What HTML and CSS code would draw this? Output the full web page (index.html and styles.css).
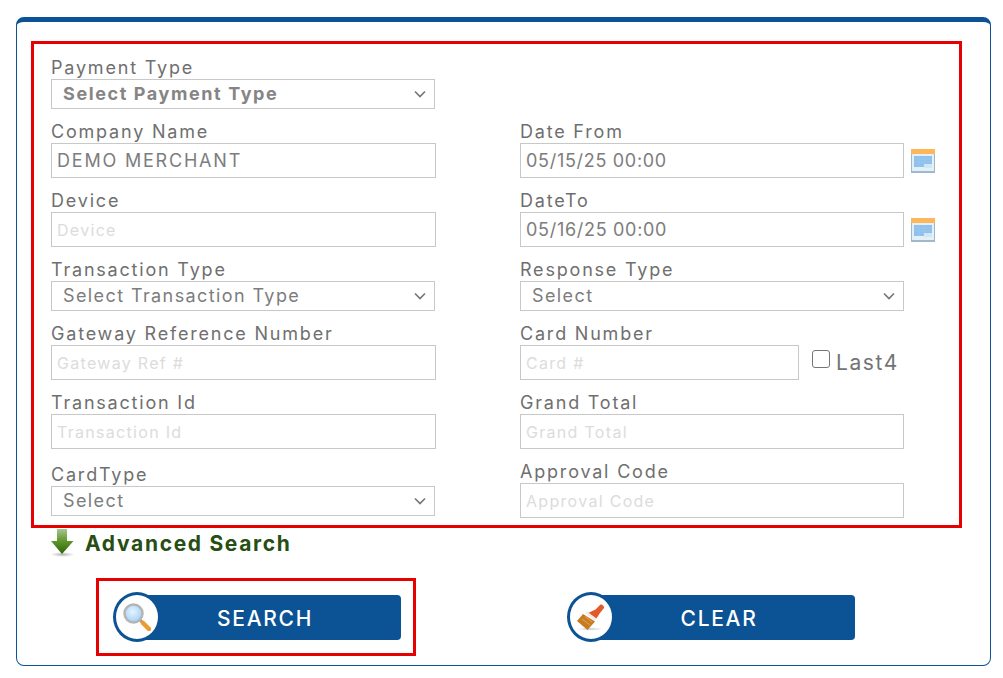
FILE: index.html
```html
<!DOCTYPE html>
<html lang="en">
<head>
  <meta charset="UTF-8">
  <meta name="viewport" content="width=device-width, initial-scale=1.0">
  <title>Transaction Search</title>
  <link rel="stylesheet" href="styles.css">
</head>
<body>
  <div class="panel">
    <div class="highlight filters">
      <div class="col col-left">
        <div class="field">
          <label>Payment Type</label>
          <select class="strong"><option>Select Payment Type</option></select>
        </div>
        <div class="field">
          <label>Company Name</label>
          <input type="text" value="DEMO MERCHANT">
        </div>
        <div class="field">
          <label>Device</label>
          <input type="text" placeholder="Device">
        </div>
        <div class="field">
          <label>Transaction Type</label>
          <select><option>Select Transaction Type</option></select>
        </div>
        <div class="field">
          <label>Gateway Reference Number</label>
          <input type="text" placeholder="Gateway Ref #">
        </div>
        <div class="field">
          <label>Transaction Id</label>
          <input type="text" placeholder="Transaction Id">
        </div>
        <div class="field field-last">
          <label>CardType</label>
          <select><option>Select</option></select>
        </div>
      </div>

      <div class="col col-right">
        <div class="field">
          <label>Date From</label>
          <div class="with-icon">
            <input class="date" type="text" value="05/15/25 00:00">
            <svg class="cal" width="24" height="24" viewBox="0 0 24 24">
              <rect width="24" height="24" fill="#9fb9ca"/>
              <rect width="24" height="5" fill="#fdb65a"/>
              <rect x="1" y="5" width="22" height="17" fill="#e2f0f8"/>
              <rect x="3" y="7" width="18" height="11" fill="#8fc0ee"/>
              <path d="M3 10H21M3 13H21M8 7V18M13 7V18" stroke="#98c6f0" stroke-width="1"/>
              <rect x="13" y="15" width="8" height="4" fill="#d3e6f4"/>
            </svg>
          </div>
        </div>
        <div class="field">
          <label>DateTo</label>
          <div class="with-icon">
            <input class="date" type="text" value="05/16/25 00:00">
            <svg class="cal" width="24" height="24" viewBox="0 0 24 24">
              <rect width="24" height="24" fill="#9fb9ca"/>
              <rect width="24" height="5" fill="#fdb65a"/>
              <rect x="1" y="5" width="22" height="17" fill="#e2f0f8"/>
              <rect x="3" y="7" width="18" height="11" fill="#8fc0ee"/>
              <path d="M3 10H21M3 13H21M8 7V18M13 7V18" stroke="#98c6f0" stroke-width="1"/>
              <rect x="13" y="15" width="8" height="4" fill="#d3e6f4"/>
            </svg>
          </div>
        </div>
        <div class="field">
          <label>Response Type</label>
          <select><option>Select</option></select>
        </div>
        <div class="field">
          <label>Card Number</label>
          <div class="card-row">
            <input type="text" placeholder="Card #">
            <span class="check-box"></span>
            <span class="last4">Last4</span>
          </div>
        </div>
        <div class="field">
          <label>Grand Total</label>
          <input type="text" placeholder="Grand Total">
        </div>
        <div class="field">
          <label>Approval Code</label>
          <input type="text" placeholder="Approval Code">
        </div>
      </div>
    </div>

    <div class="advanced">
      <svg class="soft" width="24" height="28" viewBox="0 0 24 28">
        <defs>
          <linearGradient id="arrowGreen" x1="0" y1="0" x2="0" y2="1">
            <stop offset="0" stop-color="#a9c596"/>
            <stop offset="0.45" stop-color="#64992f"/>
            <stop offset="1" stop-color="#2b6409"/>
          </linearGradient>
          <radialGradient id="arrowShadow">
            <stop offset="0" stop-color="#b5b5b5"/>
            <stop offset="1" stop-color="#fff"/>
          </radialGradient>
        </defs>
        <ellipse cx="11.500" cy="25.500" rx="12" ry="2.500" fill="url(#arrowShadow)"/>
        <path d="M6 0H16V12H22.500L11 25L0 12H6Z" fill="url(#arrowGreen)"/>
      </svg>
      <span>Advanced Search</span>
    </div>

    <div class="actions">
      <div class="highlight action-box">
        <button class="btn" type="button">
          <span class="btn-icon">
            <svg class="soft" width="28" height="28" viewBox="0 0 28 28">
              <defs>
                <radialGradient id="lens" cx="0.45" cy="0.4" r="0.6">
                  <stop offset="0" stop-color="#e4f4ff"/>
                  <stop offset="1" stop-color="#a5d0f5"/>
                </radialGradient>
              </defs>
              <path d="M17 17L20 20" stroke="#9a9a9a" stroke-width="3"/>
              <path d="M20 20L26 26" stroke="#ee9a2c" stroke-width="4.500" stroke-linecap="round"/>
              <circle cx="10.500" cy="10.500" r="9" fill="url(#lens)" stroke="#b5b5b5" stroke-width="2.500"/>
            </svg>
          </span>
          <span class="btn-label">SEARCH</span>
        </button>
      </div>
      <button class="btn btn-clear" type="button">
        <span class="btn-icon">
          <svg class="soft" width="28" height="28" viewBox="0 0 28 28">
            <defs>
              <radialGradient id="brushShadow">
                <stop offset="0" stop-color="#c8c8c8"/>
                <stop offset="1" stop-color="#fff"/>
              </radialGradient>
            </defs>
            <ellipse cx="13" cy="26" rx="13" ry="1.800" fill="url(#brushShadow)"/>
            <path d="M11 10L19 16L23 10L27 5C27.500 3 25 1 23.500 1.500L18.500 6.500Z" fill="#e2592a"/>
            <path d="M8 10L10 8.500L19.500 15.500L18 18Z" fill="#f0ebe6"/>
            <path d="M6 11L18 18.500L10.500 27L0 18Z" fill="#c67a22"/>
            <path d="M5 16L13 22M8 13.500L15 19" stroke="#dc9a42" stroke-width="1.200"/>
          </svg>
        </span>
        <span class="btn-label">CLEAR</span>
      </button>
    </div>
  </div>
</body>
</html>
```

FILE: styles.css
```css
body {
  margin: 0;
  background-color: #fff;
  font-family: "Inter", "Liberation Sans", sans-serif;
  color: #737373;
}

.panel {
  box-sizing: border-box;
  width: 975px;
  height: 649px;
  margin: 17px 0 0 16px;
  padding: 19px 14px 0 14px;
  border: 1px solid #0b5394;
  border-top-width: 5px;
  border-radius: 8px;
}

.highlight {
  border: 3px solid #e60000;
}

.filters {
  box-sizing: border-box;
  display: flex;
  width: 931px;
  height: 487px;
  padding: 13px 0 0 17px;
}

.col-left {
  width: 469px;
}

.col-right {
  padding-top: 64px;
}

.field {
  margin-bottom: 12px;
}

.field-last {
  margin-top: 15px;
}

label {
  display: block;
  height: 22px;
  font-size: 18px;
  line-height: 22px;
  letter-spacing: 1.800px;
  color: #6f6f6f;
}

input, select {
  box-sizing: border-box;
  display: block;
  border: 1px solid #c8c8c8;
  background-color: #fff;
  font-family: inherit;
  color: #7d7d7d;
  border-radius: 0;
  outline: none;
}

input {
  height: 35px;
  width: 385px;
  padding: 0 5px;
  font-size: 18px;
  letter-spacing: 1.800px;
}

input.date {
  letter-spacing: 0.700px;
}

.col-right input {
  width: 384px;
}

input::placeholder {
  color: #dcdcdc;
  font-size: 16px;
  letter-spacing: 1.300px;
  opacity: 1;
}

select {
  appearance: none;
  height: 30px;
  width: 384px;
  padding: 0 11px 2px;
  font-size: 18px;
  letter-spacing: 1.400px;
  background-image: url("data:image/svg+xml,%3Csvg xmlns='http://www.w3.org/2000/svg' width='12' height='8'%3E%3Cpath d='M1 1.500L6 6.500L11 1.500' fill='none' stroke='%23777' stroke-width='1.700'/%3E%3C/svg%3E");
  background-repeat: no-repeat;
  background-position: right 8px center;
}

select.strong {
  font-weight: 700;
  letter-spacing: 1.600px;
  color: #858585;
}

.with-icon {
  display: flex;
  align-items: center;
  gap: 7px;
}

.cal {
  margin-top: 1px;
  filter: blur(0.5px);
}

.soft {
  filter: blur(0.3px);
}

.card-row {
  display: flex;
  align-items: center;
}

.card-row input {
  width: 279px;
}

.check-box {
  box-sizing: border-box;
  width: 18px;
  height: 18px;
  margin: -7px 6px 0 13px;
  border: 1.500px solid #767676;
  border-radius: 3px;
}

.last4 {
  font-size: 21px;
  letter-spacing: 1.600px;
  color: #737373;
}

.advanced {
  display: flex;
  align-items: center;
  gap: 10px;
  height: 30px;
  padding-left: 20px;
  font-size: 21px;
  font-weight: 700;
  letter-spacing: 1.670px;
  color: #274e13;
}

.actions {
  display: flex;
  align-items: center;
  margin-top: 20px;
  padding-left: 65px;
}

.action-box {
  box-sizing: border-box;
  width: 320px;
  height: 78px;
  padding: 11px 0 0 14px;
  margin-right: 151px;
}

.btn {
  position: relative;
  display: block;
  width: 288px;
  height: 50px;
  padding: 0;
  border: 0;
  background: none;
  font-family: inherit;
  color: #fff;
}

.btn::before {
  content: "";
  position: absolute;
  left: 24px;
  right: 0;
  top: 3px;
  height: 45px;
  background-color: #0b5394;
  border-radius: 4px;
}

.btn-icon {
  position: absolute;
  left: 0;
  top: 0;
  box-sizing: border-box;
  display: flex;
  align-items: center;
  justify-content: center;
  width: 48px;
  height: 50px;
  background-color: #fff;
  border: 3px solid #0b5394;
  border-radius: 50%;
}

.btn-label {
  position: absolute;
  left: 16px;
  right: 0;
  top: 4px;
  font-size: 21px;
  line-height: 45px;
  font-weight: 500;
  letter-spacing: 1.700px;
  text-align: center;
}
```
